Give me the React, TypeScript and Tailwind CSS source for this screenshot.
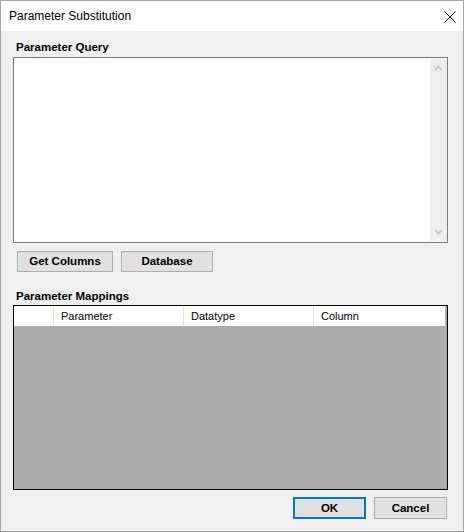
import React from "react";

const lbl = "font-['Liberation_Sans',Arial,sans-serif] text-[11px] leading-[13px]";
const blbl = "font-['Liberation_Sans',Arial,sans-serif] text-[11.5px] leading-[13px] font-bold";

function Btn({ children, w, primary }: { children: React.ReactNode; w: string; primary?: boolean }) {
  return (
    <div
      className={`${w} flex items-center justify-center bg-[#e1e1e1] ${
        primary ? "border-2 border-[#0078d7]" : "border border-[#adadad]"
      } ${blbl} text-black`}
    >
      {children}
    </div>
  );
}

export default function App() {
  return (
    <div className="w-[464px] h-[532px] border border-[#a5a5a5] bg-[#f0f0f0] flex flex-col overflow-hidden">
      <div className="h-[30px] bg-white flex items-center justify-between pl-[8px] pr-[7px] shrink-0">
        <span className="font-['Liberation_Sans',Arial,sans-serif] text-[12px] text-black leading-none">Parameter Substitution</span>
        <svg width="12" height="12" viewBox="0 0 12 12" className="mt-[1px]">
          <path d="M0.5 0.5 L11.5 11.5 M11.5 0.5 L0.5 11.5" stroke="#000" strokeWidth="1" />
        </svg>
      </div>
      <div className="flex flex-col pl-[12px]">
        <div className={`${blbl} text-black mt-[10px] pl-[3px]`}>Parameter Query</div>
        <div className="mt-[3px] w-[435px] h-[186px] border border-[#7a7a7a] bg-white flex justify-end py-[1px]">
          <div className="w-[17px] h-full bg-[#eeeeee] flex flex-col justify-between items-center py-[6px]">
            <svg width="9" height="6" viewBox="0 0 9 6">
              <path d="M1 5 L4.5 1.5 L8 5" stroke="#c2c2c2" strokeWidth="1.6" fill="none" />
            </svg>
            <svg width="9" height="6" viewBox="0 0 9 6">
              <path d="M1 1 L4.5 4.5 L8 1" stroke="#c2c2c2" strokeWidth="1.6" fill="none" />
            </svg>
          </div>
        </div>
        <div className="flex gap-[8px] mt-[8px] pl-[4px] h-[21px]">
          <Btn w="w-[96px]">Get Columns</Btn>
          <Btn w="w-[92px]">Database</Btn>
        </div>
        <div className={`${blbl} text-black mt-[18px] pl-[3px]`}>Parameter Mappings</div>
        <div className="mt-[2px] w-[435px] h-[185px] border border-black bg-[#ababab]">
          <div className={`flex h-[20px] w-[431px] bg-white ${lbl} text-black`}>
            <div className="w-[40px] border-r border-[#e3e3e3]" />
            <div className="w-[130px] border-r border-[#e3e3e3] flex items-center pl-[7px]">Parameter</div>
            <div className="w-[130px] border-r border-[#e3e3e3] flex items-center pl-[7px]">Datatype</div>
            <div className="w-[131px] flex items-center pl-[7px]">Column</div>
          </div>
        </div>
        <div className="flex gap-[8px] mt-[7px] ml-[280px] h-[22px]">
          <Btn w="w-[73px]" primary>OK</Btn>
          <Btn w="w-[73px]">Cancel</Btn>
        </div>
      </div>
    </div>
  );
}
